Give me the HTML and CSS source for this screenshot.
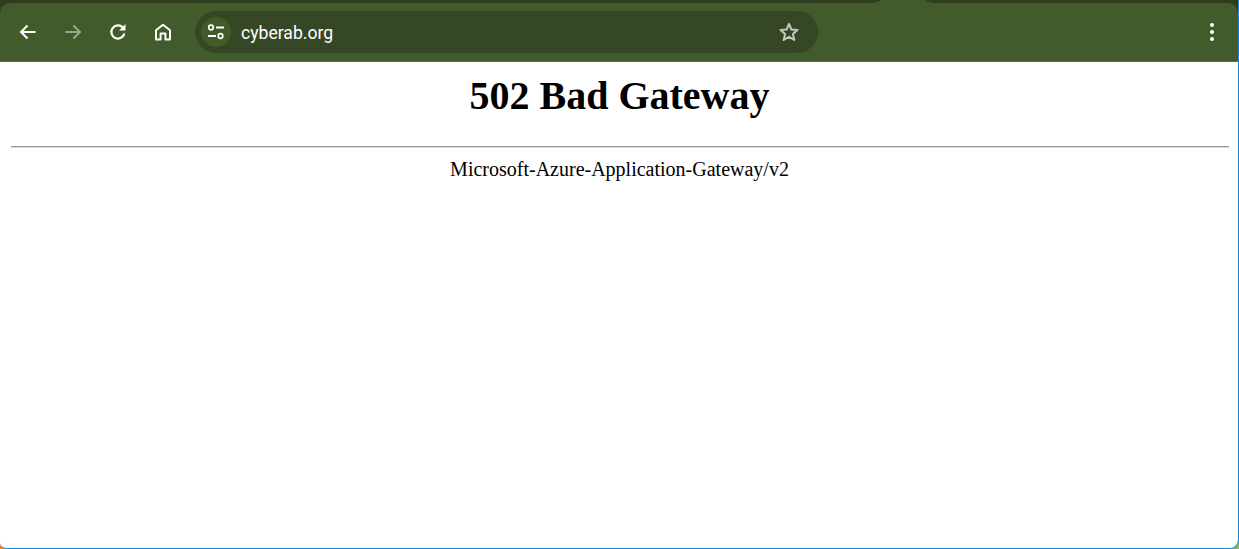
FILE: index.html
```
<!DOCTYPE html>
<html lang="en">
<head>
<meta charset="utf-8">
<title>502 Bad Gateway</title>
<link rel="stylesheet" href="styles.css">
</head>
<body>
<div class="window">
  <div class="head">
    <div class="tabstrip"><div class="strip-a"></div><div class="strip-gap"></div><div class="strip-b"></div></div>
    <header class="toolbar">
      <div class="navs">
        <svg class="ic" width="24" height="24" viewBox="0 0 24 24"><path d="M19.500 12H5.500M11.500 5.500 5 12l6.500 6.500" fill="none" stroke="#fff" stroke-width="2"/></svg>
        <svg class="ic" width="24" height="24" viewBox="0 0 24 24"><path d="M4.500 12H18.500M12.500 5.500 19 12l-6.500 6.500" fill="none" stroke="#9aa98d" stroke-width="2"/></svg>
        <svg class="ic" width="24" height="24" viewBox="0 0 24 24"><path d="M18.400 13.500A6.600 6.600 0 1 1 16.700 7.300" fill="none" stroke="#fff" stroke-width="2.200"/><path d="M19.500 4v6.500h-6.500z" fill="#fff"/></svg>
        <svg class="ic" width="24" height="24" viewBox="0 0 24 24"><path d="M5 19.500V10.300L12 4.800l7 5.500v9.200h-4.600v-6h-4.800v6z" fill="none" stroke="#fff" stroke-width="2" stroke-linejoin="round"/></svg>
      </div>
      <div class="omnibox">
        <span class="site-btn">
          <svg width="20" height="20" viewBox="0 0 20 20"><circle cx="5" cy="5.500" r="2.300" fill="none" stroke="#fff" stroke-width="1.700"/><path d="M10 5.500h8M2 14h8" stroke="#fff" stroke-width="1.900"/><circle cx="14.500" cy="14" r="2.300" fill="none" stroke="#fff" stroke-width="1.700"/></svg>
        </span>
        <span class="url">cyberab.org</span>
        <svg class="star" width="22" height="22" viewBox="0 0 22 22"><path d="M11 2.900l2.400 5.600 6.100.5-4.600 4 1.400 6L11 15.800 5.700 19l1.400-6-4.600-4 6.100-.5z" fill="none" stroke="#c3c8bd" stroke-width="2" stroke-linejoin="round"/></svg>
      </div>
      <svg class="menu" width="6" height="20" viewBox="0 0 6 20"><circle cx="3" cy="3" r="2" fill="#fff"/><circle cx="3" cy="10" r="2" fill="#fff"/><circle cx="3" cy="17" r="2" fill="#fff"/></svg>
    </header>
  </div>
  <main class="page">
    <h1 class="title">502 Bad Gateway</h1>
    <hr class="rule">
    <p class="server">Microsoft-Azure-Application-Gateway/v2</p>
  </main>
</div>
</body>
</html>
```
FILE: styles.css
```
html, body {
  margin: 0;
  padding: 0;
  height: 100%;
  overflow: hidden;
}
body {
  background: linear-gradient(to right, #f08a1e 50%, #8fb36b 50%);
}
.window {
  width: 1239px;
  height: 549px;
  display: flex;
  flex-direction: column;
  box-sizing: border-box;
  background: #fff;
  border-right: 1px solid #0a8ae6;
  border-bottom: 1px solid #0a8ae6;
  border-bottom-right-radius: 9px;
  border-bottom-left-radius: 6px;
  overflow: hidden;
}
.head { background: #2f3d1f; }
.tabstrip {
  height: 3px;
  display: flex;
  background: #425b2a;
}
.strip-a {
  width: 880px;
  background: #2f3d1f;
  border-bottom-right-radius: 10px 3px;
}
.strip-gap { width: 46px; }
.strip-b {
  flex: 1;
  background: #2f3d1f;
  border-bottom-left-radius: 10px 3px;
}
.toolbar {
  height: 59px;
  box-sizing: border-box;
  background: #425b2a;
  border-bottom: 1px solid #5f7144;
  border-top-left-radius: 10px;
  border-top-right-radius: 10px;
  display: flex;
  align-items: center;
  padding: 0 0 0 16px;
}
.navs {
  display: flex;
  gap: 21px;
  align-items: center;
}
.ic { display: block; }
.omnibox {
  margin-left: 20px;
  width: 623px;
  height: 42px;
  border-radius: 21px;
  background: #364726;
  display: flex;
  align-items: center;
  padding: 0 18px 0 6px;
  box-sizing: border-box;
}
.site-btn {
  width: 30px;
  height: 30px;
  border-radius: 50%;
  background: #425b2a;
  display: flex;
  align-items: center;
  justify-content: center;
}
.url {
  margin-left: 10px;
  padding-top: 1px;
  flex: 1;
  font: 17.600px "Roboto", "Liberation Sans", sans-serif;
  color: #fff;
}
.menu {
  margin-left: auto;
  margin-right: 23px;
}
.page {
  flex: 1;
  padding: 0 9px 0 10px;
  font-family: "Liberation Serif", "Times New Roman", serif;
  color: #000;
}
.title {
  margin: 11px 0 0;
  text-align: center;
  font-size: 40px;
  font-weight: 700;
  line-height: 46px;
}
.rule {
  margin: 27px 0 0 1px;
  border: 0;
  border-top: 1px solid #999;
  border-bottom: 1px solid #ddd;
  height: 0;
}
.server {
  margin: 10px 0 0;
  text-align: center;
  font-size: 20px;
  line-height: 23px;
}
```
